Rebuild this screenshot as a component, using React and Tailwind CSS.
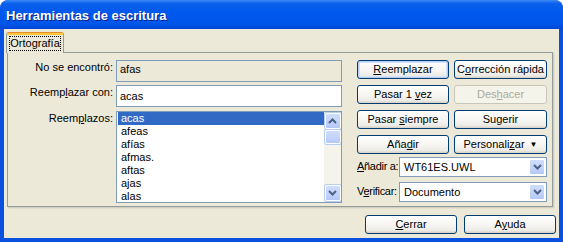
import clsx from "clsx";

const font = "font-['Liberation_Sans',Arial,sans-serif]";

function Btn({ children, def, disabled, className }) {
  return (
    <div
      className={clsx(
        "h-[19px] rounded-[3px] border flex items-center justify-center text-[11px] leading-none",
        disabled
          ? "border-[#C9C7BA] bg-[#F5F4EA] text-[#ACA899]"
          : "border-[#003C74] text-black bg-[linear-gradient(180deg,#FFFFFF_0%,#F6F5F1_55%,#ECEBE6_85%,#D6D0C5_100%)]",
        def && "shadow-[inset_0_0_0_1px_#B6CEF5,inset_0_0_0_2px_#D3E2FB]",
        className
      )}
    >
      <span className="whitespace-nowrap">{children}</span>
    </div>
  );
}

function Chevron({ up }) {
  return (
    <svg width="9" height="6" viewBox="0 0 9 6">
      <path
        d={up ? "M1 5 L4.5 1.5 L8 5" : "M1 1 L4.5 4.5 L8 1"}
        fill="none"
        stroke="#4D6185"
        strokeWidth="2"
      />
    </svg>
  );
}

function ScrollBtn({ up }) {
  return (
    <div className="h-[16px] w-[16px] rounded-[2px] border border-white bg-[linear-gradient(180deg,#CFDEFC_0%,#C1D3FB_60%,#B4C8F6_100%)] shadow-[0_0_0_1px_#B7CBF5] flex items-center justify-center">
      <Chevron up={up} />
    </div>
  );
}

function Combo({ value }) {
  return (
    <div className="w-[148px] h-[20px] border border-[#7F9DB9] bg-white flex items-center">
      <span className="flex-1 pl-[4px] text-[11px] leading-none text-black">{value}</span>
      <div className="w-[16px] h-[16px] mr-[1px] rounded-[2px] border border-white bg-[linear-gradient(180deg,#CFDEFC_0%,#C1D3FB_60%,#B4C8F6_100%)] flex items-center justify-center">
        <Chevron />
      </div>
    </div>
  );
}

const items = ["acas", "afeas", "afías", "afmas.", "aftas", "ajas", "alas"];

export default function App() {
  return (
    <div className={clsx("w-[563px] h-[242px] rounded-t-[8px] bg-[#0851E0] flex flex-col overflow-hidden", font)}>
      <div className="h-[29px] shrink-0 rounded-t-[8px] bg-[linear-gradient(180deg,#3D8CF8_0%,#0A60EC_12%,#0058EE_45%,#0056EA_80%,#0046D6_100%)] flex items-center pl-[6px] pt-[3px]">
        <span className="text-white font-bold text-[13px] [text-shadow:1px_1px_0_#0A1E8C]">
          Herramientas de escritura
        </span>
      </div>

      <div className="flex-1 mx-[4px] mb-[4px] bg-[#ECE9D8] flex flex-col text-[11px] leading-[13px] text-black">
        <div className="pt-[3px] pl-[2px] flex">
          <div className="relative z-10 w-[58px] h-[21px] rounded-t-[3px] border-t border-t-[#E68B2C] border-x border-x-[#919B9C] bg-[#ECE9D8]">
            <div className="h-[2px] bg-[#FFC83C]" />
            <div className="mx-[2px] mt-[1px] h-[15px] border border-dotted border-black flex items-center justify-center">
              Ortografía
            </div>
          </div>
        </div>

        <div className="ml-[3px] -mt-px w-[546px] h-[155px] border border-[#919B9C] shadow-[1px_1px_0_#D0CEBF,2px_2px_0_#E3E0D0] flex pt-[7px] pr-[5px]">
          <div className="w-[334px] flex flex-col">
            <div className="flex">
              <div className="w-[105px] text-right pt-[1px] whitespace-nowrap">No se encontró:</div>
              <div className="ml-[3px] w-[226px] h-[22px] border border-[#7F9DB9] bg-[#ECE9D8] pl-[3px] pt-[2px]">afas</div>
            </div>
            <div className="flex mt-[3px]">
              <div className="w-[105px] text-right pt-[1px] whitespace-nowrap">
                Reemp<u>l</u>azar con:
              </div>
              <div className="ml-[3px] w-[226px] h-[22px] border border-[#7F9DB9] bg-white pl-[3px] pt-[4px]">acas</div>
            </div>
            <div className="flex mt-[4px]">
              <div className="w-[105px] text-right pt-[1px] whitespace-nowrap">
                Reem<u>p</u>lazos:
              </div>
              <div className="ml-[3px] w-[226px] h-[92px] border border-[#7F9DB9] bg-white flex overflow-hidden">
                <div className="flex-1 pl-[1px]">
                  {items.map((it, i) => (
                    <div
                      key={it}
                      className={clsx(
                        "h-[13px] pl-[3px] leading-[13px]",
                        i === 0 && "bg-[#316AC5] text-white"
                      )}
                    >
                      {it}
                    </div>
                  ))}
                </div>
                <div className="w-[17px] bg-[#F5F4EC] flex flex-col items-center pt-[1px] pb-[1px]">
                  <ScrollBtn up />
                  <div className="mt-[1px] h-[14px] w-[16px] rounded-[2px] border border-white bg-[linear-gradient(180deg,#CFDEFC_0%,#C1D3FB_60%,#B4C8F6_100%)] shadow-[0_0_0_1px_#B7CBF5]" />
                  <div className="flex-1" />
                  <ScrollBtn />
                </div>
              </div>
            </div>
          </div>

          <div className="ml-[15px] w-[190px] flex flex-col">
            <div className="grid grid-cols-[92px_93px] gap-x-[5px] gap-y-[6px]">
              <Btn def>
                <u>R</u>eemplazar
              </Btn>
              <Btn>
                C<u>o</u>rrección rápida
              </Btn>
              <Btn>
                Pasar 1 <u>v</u>ez
              </Btn>
              <Btn disabled>
                Des<u>h</u>acer
              </Btn>
              <Btn>
                Pasar <u>s</u>iempre
              </Btn>
              <Btn>Sugerir</Btn>
              <Btn>
                Aña<u>d</u>ir
              </Btn>
              <Btn>
                Personali<u>z</u>ar<span className="ml-[5px] text-[8px] align-[1px]">▼</span>
              </Btn>
            </div>
            <div className="mt-[3px] flex items-center">
              <div className="flex-1 -mt-[2px] whitespace-nowrap tracking-[-0.3px]">
                <u>A</u>ñadir a:
              </div>
              <Combo value="WT61ES.UWL" />
            </div>
            <div className="mt-[5px] flex items-center">
              <div className="flex-1 -mt-[2px] whitespace-nowrap tracking-[-0.3px]">
                V<u>e</u>rificar:
              </div>
              <Combo value="Documento" />
            </div>
          </div>
        </div>

        <div className="mt-[8px] flex justify-end gap-[7px] pr-[3px]">
          <Btn className="w-[92px]">
            <u>C</u>errar
          </Btn>
          <Btn className="w-[92px]">
            A<u>y</u>uda
          </Btn>
        </div>
      </div>
    </div>
  );
}
